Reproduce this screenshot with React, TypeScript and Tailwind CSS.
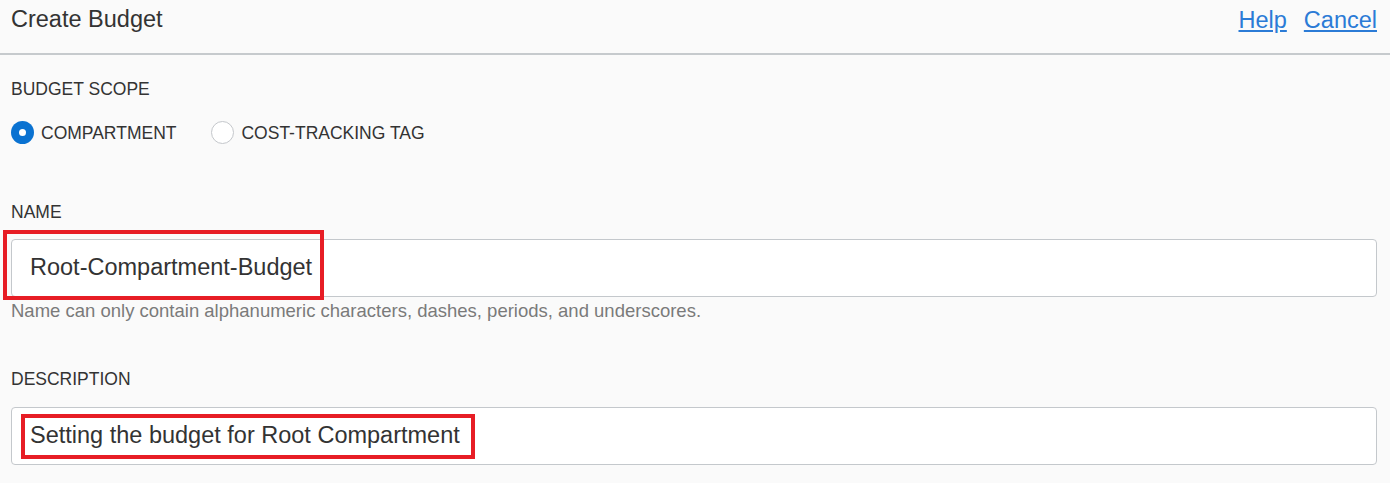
import React from "react";

const Radio = ({ checked, label }: { checked?: boolean; label: string }) => {
  return (
    <label className="flex items-center gap-[7px]">
      {checked ? (
        <span className="flex h-[23px] w-[23px] items-center justify-center rounded-full bg-[#0a72d1]">
          <span className="h-[7px] w-[7px] rounded-full bg-white" />
        </span>
      ) : (
        <span className="h-[23px] w-[23px] rounded-full border border-[#c4c7cb] bg-white" />
      )}
      <span className="text-[17.5px] leading-5 text-[#333]">{label}</span>
    </label>
  );
};

const App = () => {
  return (
    <div
      className="min-h-[483px] bg-[#fafafa] text-[#333]"
      style={{ fontFamily: '"Liberation Sans", Arial, sans-serif' }}
    >
      {/* header */}
      <div className="flex h-[55px] items-start justify-between border-b-2 border-[#c6cacd] pl-[11px] pr-[13px] pt-[6px]">
        <h1 className="text-[23.5px] leading-[27px] text-[#333]">Create Budget</h1>
        <div className="flex gap-[17px] pt-[1px] text-[23.5px] leading-[27px]">
          <a href="#" className="text-[#2b7bd6] underline">
            Help
          </a>
          <a href="#" className="text-[#2b7bd6] underline">
            Cancel
          </a>
        </div>
      </div>

      <div className="pl-[11px] pr-[13px]">
        {/* scope */}
        <div className="pt-[24px] text-[17.5px] leading-5">BUDGET SCOPE</div>
        <div className="mt-[22px] flex items-center gap-[35px]">
          <Radio checked label="COMPARTMENT" />
          <Radio label="COST-TRACKING TAG" />
        </div>

        {/* name */}
        <div className="mt-[58px] text-[17.5px] leading-5">NAME</div>
        <div className="relative mt-[17px]">
          <div className="flex h-[58px] items-center rounded-[4px] border border-[#c4c8cc] bg-white pl-[18px] text-[23.5px] text-[#333]">
            Root-Compartment-Budget
          </div>
          <div className="pointer-events-none absolute -left-[8px] -top-[9px] h-[70px] w-[321px] border-4 border-[#e71d25]" />
        </div>
        <div className="mt-[3px] text-[18.5px] leading-[22px] text-[#7a7a7a]">
          Name can only contain alphanumeric characters, dashes, periods, and underscores.
        </div>

        {/* description */}
        <div className="mt-[47px] text-[17.5px] leading-5">DESCRIPTION</div>
        <div className="relative mt-[18px]">
          <div className="flex h-[58px] items-center rounded-[4px] border border-[#c4c8cc] bg-white pl-[18px] text-[23.5px] text-[#333]">
            Setting the budget for Root Compartment
          </div>
          <div className="pointer-events-none absolute left-[10px] top-[7px] h-[45px] w-[454px] border-4 border-[#e71d25]" />
        </div>
      </div>
    </div>
  );
};

export default App;
